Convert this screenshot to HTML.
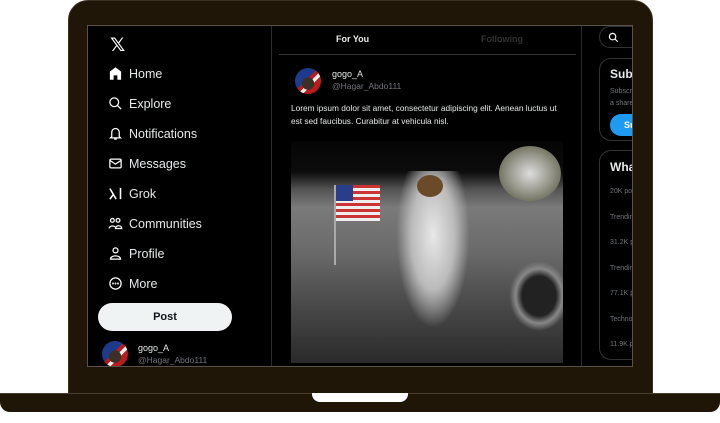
<!DOCTYPE html>
<html><head><style>
*{margin:0;padding:0;box-sizing:border-box}
body{width:720px;height:423px;background:#fff;position:relative;overflow:hidden;font-family:"Liberation Sans","DejaVu Sans",sans-serif;color:#e7e9ea}
.lid{position:absolute;left:68px;top:0;width:585px;height:394px;background:#1f1607;border-radius:20px 20px 0 0;border:1px solid #3a2f20}
.base{position:absolute;left:0;top:393px;width:720px;height:19px;background:#1f1607;border-radius:0 0 10px 10px;border-top:1px solid #4a3f30}
.notch{position:absolute;left:312px;top:393px;width:96px;height:9px;background:#fff;border-radius:0 0 8px 8px}
.screen{position:absolute;left:87px;top:25px;width:546px;height:342px;background:#000;overflow:hidden;border:1px solid #5a5248}
.nav{position:absolute;left:0;top:0;width:184px;height:100%;border-right:1px solid #2a2a2a}
.item{position:absolute;left:20px;font-size:12.5px;display:flex;align-items:center;gap:6px}
.item svg{width:15px;height:15px}
.post{position:absolute;left:10px;top:277px;width:134px;height:28px;border-radius:14px;background:#eff3f4;color:#0f1419;font-size:11px;font-weight:bold;text-align:center;line-height:28px}
.av{border-radius:50%;background:radial-gradient(circle at 50% 60%,#3a3028 0 30%,transparent 31%),linear-gradient(135deg,#1e3a8a 0 45%,#b91c1c 45% 55%,#eee 55% 65%,#b91c1c 65%);position:absolute}
.name{font-size:9px;color:#e7e9ea;position:absolute}
.handle{font-size:8.5px;color:#71767b;position:absolute}
.main{position:absolute;left:185px;top:0;width:309px;height:100%;border-right:1px solid #2a2a2a}
.img{position:absolute;left:18px;top:115px;width:272px;height:222px;overflow:hidden;background:linear-gradient(#050505 0,#0c0c0c 14%,#555 22%,#7a7a7a 30%,#6a6a6a 50%,#4e4e4e 70%,#2a2a2a 100%)}
.right{position:absolute;left:495px;top:0;width:60px;height:100%}
.card{position:absolute;left:16px;border:1px solid #2f3336;border-radius:12px;width:90px}
</style></head><body>
<div class="lid"></div>
<div class="base"></div>
<div class="notch"></div>
<div class="screen">
 <div class="nav">
  <div style="position:absolute;left:22px;top:8px;font-size:19px;color:#fff;font-weight:bold">𝕏</div>
  <div class="item" style="top:40px"><svg viewBox="0 0 24 24" fill="#fff"><path d="M12 2 3 9v13h6v-7h6v7h6V9z"/></svg>Home</div>
  <div class="item" style="top:70px"><svg viewBox="0 0 24 24" fill="none" stroke="#fff" stroke-width="2"><circle cx="10" cy="10" r="7"/><path d="M15 15l6 6"/></svg>Explore</div>
  <div class="item" style="top:100px"><svg viewBox="0 0 24 24" fill="none" stroke="#fff" stroke-width="2"><path d="M6 17V10a6 6 0 0112 0v7l2 2H4zM10 21h4"/></svg>Notifications</div>
  <div class="item" style="top:130px"><svg viewBox="0 0 24 24" fill="none" stroke="#fff" stroke-width="2"><rect x="3" y="5" width="18" height="14" rx="2"/><path d="M3 7l9 6 9-6"/></svg>Messages</div>
  <div class="item" style="top:160px"><svg viewBox="0 0 24 24" fill="none" stroke="#fff" stroke-width="2.5"><path d="M3 4l10 17M3 21l6-8M20 3v18"/></svg>Grok</div>
  <div class="item" style="top:190px"><svg viewBox="0 0 24 24" fill="none" stroke="#fff" stroke-width="2"><circle cx="7" cy="7" r="3"/><circle cx="16" cy="7" r="3"/><path d="M2 20c0-5 9-5 9-2M12 20c0-6 10-6 10 0z"/></svg>Communities</div>
  <div class="item" style="top:220px"><svg viewBox="0 0 24 24" fill="none" stroke="#fff" stroke-width="2"><circle cx="12" cy="7" r="4"/><path d="M4 21c0-7 16-7 16 0z"/></svg>Profile</div>
  <div class="item" style="top:250px"><svg viewBox="0 0 24 24" fill="none" stroke="#fff" stroke-width="2"><circle cx="12" cy="12" r="9"/><circle cx="8" cy="12" r=".6"/><circle cx="12" cy="12" r=".6"/><circle cx="16" cy="12" r=".6"/></svg>More</div>
  <div class="post">Post</div>
  <div class="av" style="left:14px;top:315px;width:26px;height:26px"></div>
  <div class="name" style="left:50px;top:317px">gogo_A</div>
  <div class="handle" style="left:50px;top:329px">@Hagar_Abdo111</div>
 </div>
 <div class="main">
  <div style="position:absolute;left:63px;top:8px;font-size:9px;font-weight:bold">For You</div>
  <div style="position:absolute;left:208px;top:8px;font-size:9px;font-weight:bold;color:#333">Following</div>
  <div style="position:absolute;left:6px;top:28px;width:297px;height:1px;background:#2f3336"></div>
  <div class="av" style="left:22px;top:42px;width:26px;height:26px"></div>
  <div class="name" style="left:59px;top:43px">gogo_A</div>
  <div class="handle" style="left:59px;top:55px">@Hagar_Abdo111</div>
  <div style="position:absolute;left:18px;top:76px;width:272px;font-size:8.3px;line-height:13px;color:#e7e9ea">Lorem ipsum dolor sit amet, consectetur adipiscing elit. Aenean luctus ut est sed faucibus. Curabitur at vehicula nisl.</div>
  <div class="img">
   <div style="position:absolute;left:44px;top:44px;width:45px;height:36px;background:repeating-linear-gradient(#c33 0 3px,#eee 3px 6px)"></div>
   <div style="position:absolute;left:44px;top:44px;width:18px;height:16px;background:#2a3d8a"></div>
   <div style="position:absolute;left:43px;top:44px;width:2px;height:80px;background:#aaa"></div>
   <div style="position:absolute;left:104px;top:30px;width:76px;height:160px;background:radial-gradient(ellipse at 50% 40%,#e8e8e8 0,#bbb 40%,transparent 68%)"></div>
   <div style="position:absolute;left:126px;top:34px;width:26px;height:22px;border-radius:50%;background:#6b4a2a"></div>
   <div style="position:absolute;left:208px;top:5px;width:62px;height:55px;border-radius:50%;background:radial-gradient(#ddd,#776 70%,transparent 72%)"></div>
   <div style="position:absolute;left:218px;top:120px;width:60px;height:70px;border-radius:50%;background:radial-gradient(#222 0 40%,#888 55%,transparent 70%)"></div>
  </div>
 </div>
 <div class="right">
  <div style="position:absolute;left:16px;top:0;width:50px;height:22px;border:1px solid #2f3336;border-radius:11px"><svg style="position:absolute;left:8px;top:5px" width="11" height="11" viewBox="0 0 24 24" fill="none" stroke="#fff" stroke-width="2.5"><circle cx="10" cy="10" r="7"/><path d="M15 15l6 6"/></svg></div>
  <div class="card" style="top:32px;height:83px"><div style="position:absolute;left:10px;top:8px;font-size:12px;font-weight:bold">Subscribe</div><div style="position:absolute;left:10px;top:27px;font-size:7px;color:#71767b;line-height:12px">Subscribe<br>a share</div><div style="position:absolute;left:10px;top:55px;width:60px;height:22px;border-radius:11px;background:#1d9bf0;color:#fff;font-size:9px;font-weight:bold;padding:6px 14px">Sub</div></div>
  <div class="card" style="top:124px;height:210px"><div style="position:absolute;left:10px;top:9px;font-size:12px;font-weight:bold">What's</div>
   <div style="position:absolute;left:10px;top:28px;font-size:7px;color:#71767b;line-height:25.5px">20K posts<br>Trending<br>31.2K posts<br>Trending<br>77.1K posts<br>Technology<br>11.9K posts</div></div>
 </div>
</div>
</body></html>
